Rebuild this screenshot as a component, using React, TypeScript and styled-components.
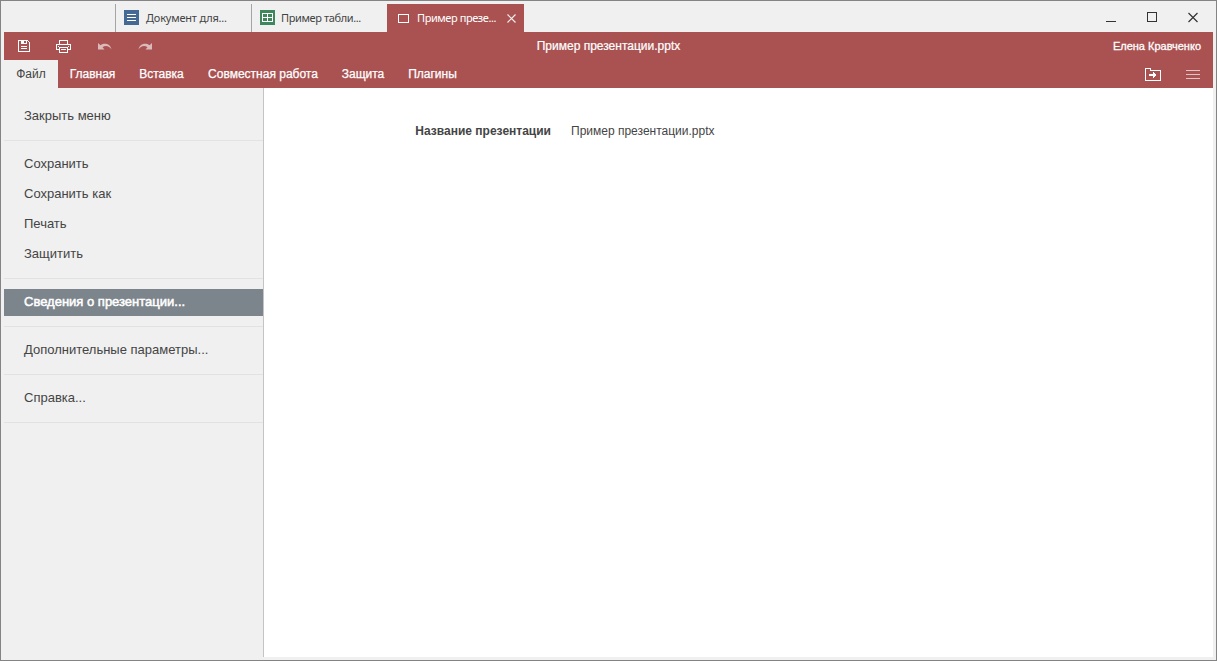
import React from 'react';
import styled, { createGlobalStyle } from 'styled-components';

const Global = createGlobalStyle`
  * { box-sizing: border-box; }
  body { margin: 0; font-family: "Liberation Sans", Arial, sans-serif; font-size: 12px; color: #444; }
  svg { display: block; flex: none; }
`;

const Window = styled.div`
  width: 1217px;
  height: 661px;
  padding: 3px;
  border: 1px solid #848484;
  background: #f0f0f0;
  display: flex;
  flex-direction: column;
  overflow: hidden;
`;

const TitleBar = styled.div`
  height: 28px;
  flex: none;
  display: flex;
  padding-left: 111px;
`;

const DocTab = styled.div<{ $active?: boolean }>`
  width: ${p => (p.$active ? 137 : 136)}px;
  display: flex;
  align-items: center;
  padding: 0 8px ${p => (p.$active ? 0 : 1)}px ${p => (p.$active ? 11 : 8)}px;
  border-left: ${p => (p.$active ? 'none' : '1px solid #a5a5a5')};
  background: ${p => (p.$active ? '#aa5252' : 'transparent')};
  color: ${p => (p.$active ? '#fff' : '#444')};
`;

const DocName = styled.span<{ $gap: number; $spacing: number }>`
  flex: 1;
  margin-left: ${p => p.$gap}px;
  font: 11px "Noto Sans", Tahoma, sans-serif;
  line-height: 28px;
  letter-spacing: ${p => p.$spacing}px;
  white-space: nowrap;
`;

const WindowControls = styled.div`
  margin-left: auto;
  display: flex;
  align-items: center;
  gap: 27px;
  padding: 0 13px 1px 0;
`;

const Header = styled.header`
  height: 56px;
  flex: none;
  background: #aa5252;
  color: #fff;
`;

const QuickBar = styled.div`
  height: 28px;
  display: grid;
  grid-template-columns: 1fr auto 1fr;
  align-items: center;
  padding: 0 12px 0 14px;
`;

const QuickIcons = styled.div`
  display: flex;
  align-items: center;
`;

const QuickButton = styled.span<{ $width: number; $drop?: number }>`
  width: ${p => p.$width}px;
  padding-top: ${p => p.$drop ?? 0}px;
`;

const FileTitle = styled.span`
  line-height: 28px;
  margin-left: -2px;
  -webkit-text-stroke: 0.2px currentColor;
`;

const UserName = styled.span`
  justify-self: end;
  font-size: 11px;
  -webkit-text-stroke: 0.3px currentColor;
`;

const MenuBar = styled.nav`
  height: 28px;
  display: flex;
  padding-right: 13px;
`;

const MenuTab = styled.span<{ $active?: boolean; $width: number }>`
  width: ${p => p.$width}px;
  text-align: center;
  line-height: 28px;
  white-space: nowrap;
  background: ${p => (p.$active ? '#f0f0f0' : 'transparent')};
  color: ${p => (p.$active ? '#444' : '#fff')};
  -webkit-text-stroke: ${p => (p.$active ? 0 : 0.25)}px currentColor;
`;

const MenuActions = styled.div`
  margin-left: auto;
  display: flex;
  align-items: center;
  gap: 25px;
`;

const Body = styled.div`
  flex: 1;
  display: flex;
  min-height: 0;
`;

const Sidebar = styled.aside`
  width: 260px;
  flex: none;
  border-right: 1px solid #c4c4c4;
  padding-top: 15px;
`;

const Group = styled.div`
  display: flex;
  flex-direction: column;
  gap: 3px;
  padding-bottom: 10px;
  margin-bottom: 10px;
  border-bottom: 1px solid #e2e2e2;
`;

const SideItem = styled.div<{ $selected?: boolean }>`
  height: 27px;
  line-height: 26px;
  padding-left: 20px;
  font-size: 13px;
  white-space: nowrap;
  -webkit-text-stroke: ${p => (p.$selected ? 0.5 : 0)}px currentColor;
  background: ${p => (p.$selected ? '#7d858c' : 'transparent')};
  color: ${p => (p.$selected ? '#fff' : '#444')};
`;

const Content = styled.main`
  flex: 1;
  background: #fff;
  padding-top: 35px;
`;

const InfoRow = styled.div`
  display: flex;
  line-height: 16px;
`;

const InfoLabel = styled.span`
  width: 287px;
  text-align: right;
  font-weight: 700;
`;

const InfoValue = styled.span`
  margin-left: 20px;
`;

const DocIcon = () => (
  <svg width="15" height="15" shapeRendering="crispEdges">
    <rect width="15" height="15" rx="1" fill="#446995" />
    <path d="M3 4.5h9M3 7.5h9M3 10.5h9" stroke="#fff" />
  </svg>
);

const SheetIcon = () => (
  <svg width="15" height="15" shapeRendering="crispEdges">
    <rect width="15" height="15" rx="1" fill="#40865c" />
    <path d="M2.5 3.5h10v8h-10zM2.5 7.5h10M7.5 3.5v8" stroke="#fff" fill="none" />
  </svg>
);

const SlideIcon = () => (
  <svg width="11" height="9" shapeRendering="crispEdges"><path d="M.5.5h10v8H.5z" fill="none" stroke="#fff" /></svg>
);

const TabClose = () => (
  <svg width="9" height="9"><path d="M.5.5l8 8M8.5.5l-8 8" stroke="#fff" strokeWidth="1.2" opacity=".9" /></svg>
);

const SaveIcon = () => (
  <svg width="12" height="12" fill="none" stroke="#fff" shapeRendering="crispEdges">
    <path d="M.5.5h9l2 2v9H.5z" />
    <path d="M3 6.5h6M3 8.5h6" />
    <path d="M3 0h6v4H3z" fill="#fff" stroke="none" />
    <path d="M6 1h2v2H6z" fill="#aa5252" stroke="none" />
  </svg>
);

const PrintIcon = () => (
  <svg width="15" height="13" fill="none" stroke="#fff" shapeRendering="crispEdges">
    <path d="M3.5 4V.5h8V4M3 9.5H.5v-5h14v5H12" />
    <path d="M3.5 7.5h8v5h-8zM5 9.5h5M2 6.5h1M12 6.5h1" />
  </svg>
);

const UndoIcon = ({ flip = false }: { flip?: boolean }) => (
  <svg width="14" height="8" viewBox="0 0 14 8" fill="#fff" opacity=".6">
    <path
      transform={flip ? 'translate(14 0) scale(-1 1)' : undefined}
      d="M0 0v6.5h6.5L4.5 4.3C7.5 1.8 11.5 3 13.5 6.5C12.5 1 7 -1 2.5 2.2z"
    />
  </svg>
);

const FolderIcon = () => (
  <svg width="16" height="13" fill="none" stroke="#fff" shapeRendering="crispEdges">
    <path d="M.5 12.5V.5h5v2h10v10z" />
    <path d="M4 6h4V4h1v1h1v1h1v2h-1v1H9v1H8V8H4z" fill="#fff" stroke="none" />
  </svg>
);

const LinesIcon = () => (
  <svg width="14" height="9"><path d="M0 .5h14M0 4.5h14M0 8.5h14" stroke="#fff" opacity=".65" /></svg>
);

const MinimizeIcon = () => (
  <svg width="14" height="11"><path d="M2 9.5h10" stroke="#333" /></svg>
);

const MaximizeIcon = () => (
  <svg width="14" height="11"><path d="M2.5.5h9v9h-9z" fill="none" stroke="#333" shapeRendering="crispEdges" /></svg>
);

const CloseIcon = () => (
  <svg width="14" height="11"><path d="M2.5 1l9 9M11.5 1l-9 9" stroke="#333" strokeWidth="1.2" /></svg>
);

const groups: { label: string; selected?: boolean }[][] = [
  [{ label: 'Закрыть меню' }],
  [{ label: 'Сохранить' }, { label: 'Сохранить как' }, { label: 'Печать' }, { label: 'Защитить' }],
  [{ label: 'Сведения о презентации...', selected: true }],
  [{ label: 'Дополнительные параметры...' }],
  [{ label: 'Справка...' }],
];

export default function App() {
  return (
    <>
      <Global />
      <Window>
        <TitleBar>
          <DocTab><DocIcon /><DocName $gap={7} $spacing={-0.2}>Документ для...</DocName></DocTab>
          <DocTab><SheetIcon /><DocName $gap={6} $spacing={-0.38}>Пример табли...</DocName></DocTab>
          <DocTab $active><SlideIcon /><DocName $gap={8} $spacing={-0.42}>Пример презе...</DocName><TabClose /></DocTab>
          <WindowControls><MinimizeIcon /><MaximizeIcon /><CloseIcon /></WindowControls>
        </TitleBar>
        <Header>
          <QuickBar>
            <QuickIcons>
              <QuickButton $width={38}><SaveIcon /></QuickButton>
              <QuickButton $width={42}><PrintIcon /></QuickButton>
              <QuickButton $width={40} $drop={2}><UndoIcon /></QuickButton>
              <QuickButton $width={14} $drop={2}><UndoIcon flip /></QuickButton>
            </QuickIcons>
            <FileTitle>Пример презентации.pptx</FileTitle>
            <UserName>Елена Кравченко</UserName>
          </QuickBar>
          <MenuBar>
            <MenuTab $active $width={54}>Файл</MenuTab>
            <MenuTab $width={69}>Главная</MenuTab>
            <MenuTab $width={69}>Вставка</MenuTab>
            <MenuTab $width={134}>Совместная работа</MenuTab>
            <MenuTab $width={66}>Защита</MenuTab>
            <MenuTab $width={73}>Плагины</MenuTab>
            <MenuActions><FolderIcon /><LinesIcon /></MenuActions>
          </MenuBar>
        </Header>
        <Body>
          <Sidebar>
            {groups.map((items, i) => (
              <Group key={i}>
                {items.map(it => (
                  <SideItem key={it.label} $selected={it.selected}>{it.label}</SideItem>
                ))}
              </Group>
            ))}
          </Sidebar>
          <Content>
            <InfoRow>
              <InfoLabel>Название презентации</InfoLabel>
              <InfoValue>Пример презентации.pptx</InfoValue>
            </InfoRow>
          </Content>
        </Body>
      </Window>
    </>
  );
}
